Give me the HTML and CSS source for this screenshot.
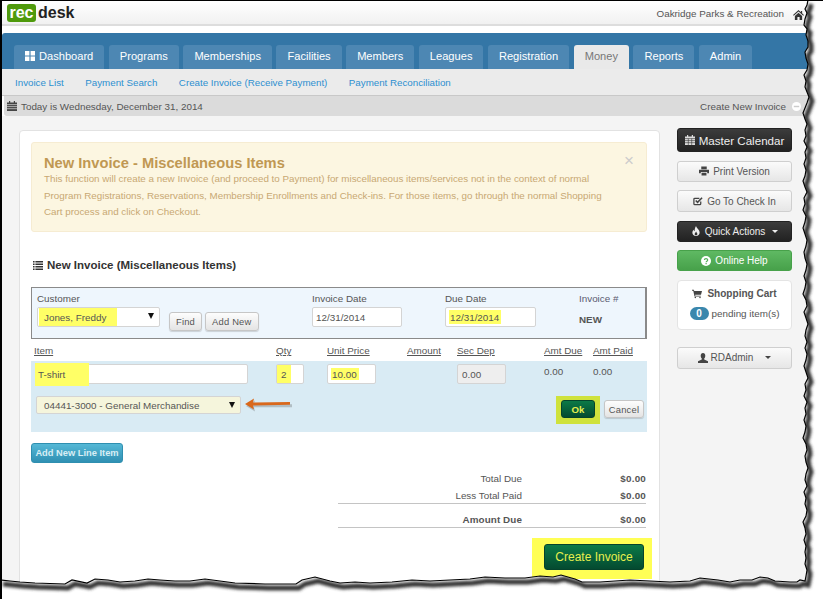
FILE: index.html
```html
<!DOCTYPE html>
<html lang="en">
<head>
  <meta charset="UTF-8" />
  <title>New Invoice - Miscellaneous Items</title>
  <link rel="stylesheet" href="styles.css">
</head>
<body>

<div class="shot">
  <div class="topbar">
    <div class="logo"><span class="logo-rec">rec</span><span class="logo-desk">desk</span></div>
    <div class="org">
      <span>Oakridge Parks &amp; Recreation</span>
      <svg class="home-icon" viewBox="0 0 12 11"><path d="M6 0 L8.6 2.4 V1 H10 V3.7 L12 5.6 L11.2 6.4 L6 1.7 L.8 6.4 L0 5.6 Z M2 6.6 L6 3 L10 6.6 V11 H7.2 V7.8 H4.8 V11 H2 Z" fill="#333"/></svg>
    </div>
  </div>

  <div class="nav">
    <a class="tab">
      <svg class="dash-icon" viewBox="0 0 10 10"><path d="M0 0H4.4V4.4H0Z M5.6 0H10V4.4H5.6Z M0 5.6H4.4V10H0Z M5.6 5.6H10V10H5.6Z" fill="#fff"/></svg>
      Dashboard
    </a>
    <a class="tab">Programs</a>
    <a class="tab">Memberships</a>
    <a class="tab">Facilities</a>
    <a class="tab">Members</a>
    <a class="tab">Leagues</a>
    <a class="tab">Registration</a>
    <a class="tab active">Money</a>
    <a class="tab">Reports</a>
    <a class="tab">Admin</a>
  </div>

  <div class="subnav">
    <a>Invoice List</a>
    <a>Payment Search</a>
    <a>Create Invoice (Receive Payment)</a>
    <a>Payment Reconciliation</a>
  </div>

  <div class="datebar">
    <div class="today">
      <svg class="cal-icon" viewBox="0 0 10 10"><path d="M0 1.5H10V10H0Z M2 0H3.2V2H2Z M6.8 0H8V2H6.8Z" fill="#444"/><path d="M0 3.6H10 M0 5.6H10 M0 7.7H10" stroke="#ddd" stroke-width=".7"/></svg>
      Today is Wednesday, December 31, 2014
    </div>
    <div class="crumb">Create New Invoice</div>
    <svg class="back-icon" viewBox="0 0 10 10"><circle cx="5" cy="5" r="5" fill="#fff"/><path d="M2 5H8" stroke="#ccc" stroke-width="1.6"/></svg>
  </div>

  <div class="content">
    <div class="card">
      <div class="alert">
        <span class="alert-close">&times;</span>
        <div class="alert-title">New Invoice - Miscellaneous Items</div>
        This function will create a new Invoice (and proceed to Payment) for miscellaneous items/services not in the context of normal<br>
        Program Registrations, Reservations, Membership Enrollments and Check-ins. For those items, go through the normal Shopping<br>
        Cart process and click on Checkout.
      </div>

      <h2 class="form-title">
        <svg class="list-icon" viewBox="0 0 10 9"><path d="M0 0H1.6V1.5H0Z M2.4 0H10V1.5H2.4Z M0 2.5H1.6V4H0Z M2.4 2.5H10V4H2.4Z M0 5H1.6V6.5H0Z M2.4 5H10V6.5H2.4Z M0 7.5H1.6V9H0Z M2.4 7.5H10V9H2.4Z" fill="#333"/></svg>
        New Invoice (Miscellaneous Items)
      </h2>

      <div class="customer-box">
        <div>
          <div class="field-label">Customer</div>
          <div class="customer-row">
            <div class="input select customer-select"><span class="hl hl-jones">Jones, Freddy</span><i class="caret"></i></div>
            <button class="btn-small find-btn">Find</button>
            <button class="btn-small">Add New</button>
          </div>
        </div>
        <div>
          <div class="field-label">Invoice Date</div>
          <div class="input date-input">12/31/2014</div>
        </div>
        <div>
          <div class="field-label">Due Date</div>
          <div class="input date-input due-input"><span class="hl hl-due">12/31/2014</span></div>
        </div>
        <div>
          <div class="field-label invoice-no">Invoice #</div>
          <div class="new-label">NEW</div>
        </div>
      </div>

      <div class="item-grid item-head">
        <u>Item</u><u>Qty</u><u>Unit Price</u><u>Amount</u><u>Sec Dep</u><u>Amt Due</u><u>Amt Paid</u>
      </div>

      <div class="line-panel">
        <div class="item-grid">
          <div class="input item-input"><span class="hl hl-tshirt">T-shirt</span></div>
          <div class="input qty-input"><span class="hl hl-qty">2</span></div>
          <div class="input price-input"><span class="hl hl-price">10.00</span></div>
          <div></div>
          <div class="input price-input dep-input">0.00</div>
          <div class="amt">0.00</div>
          <div class="amt">0.00</div>
        </div>
        <div class="line-actions">
          <div class="input select gl-select">04441-3000 - General Merchandise<i class="caret"></i></div>
          <svg class="orange-arrow" viewBox="0 0 50 16"><path d="M1 8 L10 2.5 L9 6.2 H47 V9.2 H9 L10 13.5 Z" fill="#555" opacity=".3" transform="translate(1 2)"/><path d="M1 8 L10 2.5 L9 6.5 L46 6 V8.8 L9 9.5 L10 13.5 Z" fill="#d9681c"/></svg>
          <div class="ok-mark"><button class="btn-green btn-ok">Ok</button></div>
          <button class="btn-small cancel-btn">Cancel</button>
        </div>
      </div>

      <button class="btn-add">Add New Line Item</button>

      <div class="totals">
        <div class="total-row"><span>Total Due</span><b>$0.00</b></div>
        <div class="total-row ruled"><span>Less Total Paid</span><b>$0.00</b></div>
        <div class="total-row ruled amount-due"><span>Amount Due</span><b>$0.00</b></div>
      </div>

      <div class="create-mark"><button class="btn-green btn-create">Create Invoice</button></div>
    </div>

    <div class="side">
      <button class="side-btn dark master">
        <svg class="ic" viewBox="0 0 10 10"><path d="M0 1.5H10V10H0Z M2 0H3.2V2H2Z M6.8 0H8V2H6.8Z" fill="#ddd"/><path d="M0 3.6H10 M0 5.6H10 M0 7.7H10 M3.3 3.6V10 M6.7 3.6V10" stroke="#333" stroke-width=".6"/></svg>
        Master Calendar
      </button>
      <button class="side-btn">
        <svg class="ic" viewBox="0 0 11 10"><path d="M2.5 0H8.5V3H2.5Z M0 3.5H11V7.5H9V6H2V7.5H0Z M2.8 6.8H8.2V10H2.8Z" fill="#444"/></svg>
        Print Version
      </button>
      <button class="side-btn tall">
        <svg class="ic" viewBox="0 0 11 10"><path d="M8.5 5.5V8a1 1 0 0 1-1 1H2a1 1 0 0 1-1-1V3a1 1 0 0 1 1-1H7" fill="none" stroke="#444" stroke-width="1.4"/><path d="M3 4.5L5 6.5L10 1.5" fill="none" stroke="#444" stroke-width="1.7"/></svg>
        Go To Check In
      </button>
      <button class="side-btn dark">
        <svg class="ic" viewBox="0 0 9 11"><path d="M4.5 0C5 2.5 8.5 4 8.5 7.2C8.5 9.5 6.8 11 4.5 11C2.2 11 .5 9.5 .5 7.2C.5 5.6 1.4 4.6 2 4C2.1 5 2.5 5.5 3 5.7C3 3.8 3.4 1.5 4.5 0Z" fill="#eee"/><path d="M4.6 6C5 7.2 6 7.6 6 8.8C6 9.7 5.4 10.3 4.5 10.3C3.6 10.3 3 9.7 3 8.8C3 7.8 4.2 7.2 4.6 6Z" fill="#333"/></svg>
        Quick Actions <i class="caret-sm white"></i>
      </button>
      <button class="side-btn green">
        <svg class="ic" viewBox="0 0 10 10"><circle cx="5" cy="5" r="5" fill="#fff"/><path d="M3.4 4C3.4 2.2 6.7 2.2 6.7 4C6.7 5.1 5.1 5.2 5.1 6.3" fill="none" stroke="#55b158" stroke-width="1.2"/><path d="M4.5 7H5.7V8.2H4.5Z" fill="#55b158"/></svg>
        Online Help
      </button>
      <div class="cart">
        <div class="cart-title">
          <svg class="ic" viewBox="0 0 12 10"><path d="M0 0H2.2L2.7 1.4H12L10.8 6H3.8L4 7H10.5V8H3L1.5 1H0Z" fill="#444"/><circle cx="4" cy="9.1" r=".9" fill="#444"/><circle cx="9.6" cy="9.1" r=".9" fill="#444"/></svg>
          Shopping Cart
        </div>
        <div class="cart-count"><span class="badge">0</span> pending item(s)</div>
      </div>
      <button class="side-btn tall user-btn">
        <svg class="ic" viewBox="0 0 10 10"><path d="M5 0C6.5 0 7.3 1.2 7.3 2.8C7.3 4 6.8 5 6.2 5.6V6.4L10 8.2V10H0V8.2L3.8 6.4V5.6C3.2 5 2.7 4 2.7 2.8C2.7 1.2 3.5 0 5 0Z" fill="#444"/></svg>
        RDAdmin <i class="caret-sm"></i>
      </button>
    </div>
  </div>

  <!-- torn paper edge of the screenshot, lies over the page -->
  <svg class="torn" viewBox="0 0 823 599">
    <defs>
      <path id="edge" d="M808 0L807 5 805 9 807 13 805 19 804 25 807 29 806 35 808 41 808 47 805 52 806 58 808 64 807 70 804 75 806 81 805 87 807 92 809 97 807 103 805 108 803 113 805 119 807 124 805 130 806 136 804 141 807 147 805 152 806 158 804 164 806 170 805 176 803 181 805 187 807 192 804 198 805 204 803 210 806 216 805 222 803 228 805 234 807 240 806 246 804 252 805 258 807 264 806 270 804 276 806 282 805 288 803 294 806 300 807 306 804 312 806 318 808 324 806 330 805 336 807 342 805 348 807 354 806 360 804 366 806 372 808 378 805 384 806 390 804 396 807 402 805 408 806 414 804 420 806 426 805 432 803 438 806 444 807 450 805 456 806 462 808 468 806 474 805 480 807 486 804 492 806 498 805 504 807 510 806 516 803 522 805 528 806 534 804 540 806 546 805 552 806 558 805 564 807 570 806 576 805 581 800 580 797 582 790 582 775 581 768 578 760 577 752 580 740 580 730 582 718 580 700 578 690 581 670 582 650 581 630 580 600 582 582 582 575 579 561 575 553 577 540 576 525 578 505 578 485 577 470 579 450 580 430 581 412 580 392 582 370 583 355 582 340 583 330 581 315 577 302 580 296 584 265 584 235 583 220 581 205 579 190 581 175 581 160 580 148 579 135 581 120 582 108 580 95 579 87 583 72 580 65 584 35 583 20 582 10 581 0 580"/>
      <clipPath id="outside">
        <path d="M808 0L823 0 823 599 0 599 0 580 10 581 20 582 35 583 65 584 72 580 87 583 95 579 108 580 120 582 135 581 148 579 160 580 175 581 190 581 205 579 220 581 235 583 265 584 296 584 302 580 315 577 330 581 340 583 355 582 370 583 392 582 412 580 430 581 450 580 470 579 485 577 505 578 525 578 540 576 553 577 561 575 575 579 582 582 600 582 630 580 650 581 670 582 690 581 700 578 718 580 730 582 740 580 752 580 760 577 768 578 775 581 790 582 797 582 800 580 805 581 806 576 807 570 805 564 806 558 805 552 806 546 804 540 806 534 805 528 803 522 806 516 807 510 805 504 806 498 804 492 807 486 805 480 806 474 808 468 806 462 805 456 807 450 806 444 803 438 805 432 806 426 804 420 806 414 805 408 807 402 804 396 806 390 805 384 808 378 806 372 804 366 806 360 807 354 805 348 807 342 805 336 806 330 808 324 806 318 804 312 807 306 806 300 803 294 805 288 806 282 804 276 806 270 807 264 805 258 804 252 806 246 807 240 805 234 803 228 805 222 806 216 803 210 805 204 804 198 807 192 805 187 803 181 805 176 806 170 804 164 806 158 805 152 807 147 804 141 806 136 805 130 807 124 805 119 803 113 805 108 807 103 809 97 807 92 805 87 806 81 804 75 807 70 808 64 806 58 805 52 808 47 808 41 806 35 807 29 804 25 805 19 807 13 805 9 807 5Z"/>
      </clipPath>
      <filter id="soft" x="-5%" y="-5%" width="110%" height="110%"><feGaussianBlur stdDeviation="1.8"/></filter>
    </defs>
    <rect class="torn-bg" width="823" height="599" clip-path="url(#outside)"/>
    <g clip-path="url(#outside)">
      <use href="#edge" class="torn-shadow" transform="translate(3 4)" filter="url(#soft)"/>
    </g>
    <use href="#edge" class="torn-line"/>
  </svg>
</div>

</body>
</html>
```

FILE: styles.css
```css
* {
  box-sizing: border-box;
}
body {
  margin: 0;
  background: #fff;
  font-family: "Liberation Sans", Arial, sans-serif;
  font-size: 9.85px;
  color: #555;
}
button {
  font-family: inherit;
  cursor: pointer;
}
.shot {
  position: relative;
  width: 823px;
  height: 599px;
  overflow: hidden;
  display: flex;
  flex-direction: column;
  background: #fff;
  border-top: 1px solid #000;
  border-left: 2px solid #000;
}

/* top bar */
.topbar {
  display: flex;
  justify-content: space-between;
  height: 25px;
  flex-shrink: 0;
  padding: 3px 19px 0 5px;
  background: linear-gradient(#fff, #f1f1f1);
  border-bottom: 2px solid #ddd;
}
.logo {
  display: flex;
  align-items: flex-start;
  font-size: 16px;
  font-weight: bold;
  line-height: 18px;
}
.logo-rec {
  width: 29px;
  height: 18px;
  text-align: center;
  color: #fff;
  background: #4f9a0c;
  border-radius: 3px;
}
.logo-desk {
  margin-left: 2px;
  color: #222;
}
.org {
  display: flex;
  align-items: flex-start;
  padding-top: 4px;
  line-height: 12px;
  white-space: nowrap;
}
.home-icon {
  width: 11px;
  height: 10px;
  margin: 2px 0 0 9px;
  flex-shrink: 0;
}

/* main nav */
.nav {
  display: flex;
  gap: 4.5px;
  height: 36px;
  flex-shrink: 0;
  margin-top: 7px;
  padding: 12px 0 0 12px;
  background: #3476a6;
  border-radius: 3px 0 0 0;
}
.tab {
  display: flex;
  align-items: center;
  padding: 0 11px 3px;
  font-size: 11.1px;
  color: #fff;
  background: #4d87b3;
  border-radius: 3px 3px 0 0;
}
.tab.active {
  color: #777;
  background: #e9e9e9;
}
.dash-icon {
  width: 10px;
  height: 10px;
  margin-right: 4px;
}

/* sub nav */
.subnav {
  display: flex;
  gap: 21.5px;
  height: 27px;
  flex-shrink: 0;
  align-items: center;
  padding: 1px 0 0 13px;
  color: #2d8fd0;
  background: #ebebeb;
  border-bottom: 1px solid #c8c8c8;
  font-size: 9.75px;
}

/* date bar */
.datebar {
  display: flex;
  align-items: center;
  height: 20px;
  flex-shrink: 0;
  margin-left: 2px;
  padding: 0 22px 0 3px;
  background: #dbdbdb;
  border-radius: 0 0 0 3px;
}
.today {
  display: flex;
  align-items: center;
  flex: 1;
}
.cal-icon {
  width: 10px;
  height: 10px;
  margin: 0 4px 0 0;
}
.back-icon {
  width: 9px;
  height: 9px;
  margin-left: 6px;
}

/* page body */
.content {
  display: flex;
  flex: 1;
  align-items: flex-start;
  gap: 17px;
  padding: 12px 0 0 17px;
  background: #f4f4f4;
}
.card {
  width: 641px;
  height: 480px;
  flex-shrink: 0;
  margin-top: 2px;
  padding: 11px 12px 0 11px;
  background: #fff;
  border: 1px solid #e2e2e2;
  border-radius: 4px;
}

.alert {
  position: relative;
  height: 90px;
  padding: 12px 12px 0;
  font-size: 9.8px;
  line-height: 16.5px;
  color: #c8a873;
  background: #fcf6e1;
  border: 1px solid #f6ecd2;
  border-radius: 3px;
}
.alert-title {
  font-size: 14.7px;
  font-weight: bold;
  line-height: 16px;
  color: #c09853;
}
.alert-close {
  position: absolute;
  top: 8px;
  right: 12px;
  font-size: 17px;
  line-height: 20px;
  color: #ccc;
}

.form-title {
  display: flex;
  align-items: center;
  height: 14px;
  margin: 26px 0 15px;
  padding-left: 2px;
  font-size: 11.5px;
  color: #333;
}
.list-icon {
  width: 10px;
  height: 9px;
  margin-right: 4px;
}

.customer-box {
  display: grid;
  grid-template-columns: 275px 133px 134px 1fr;
  height: 52px;
  padding: 4px 0 0 5px;
  background: #eef6fd;
  border: 1px solid #8a8a8a;
  border-right-width: 2px;
}
.field-label {
  line-height: 14px;
  margin-bottom: 1px;
}
.invoice-no {
  color: #5a5a70;
}
.new-label {
  margin-top: 7px;
  font-weight: bold;
  line-height: 14px;
}
.customer-row {
  display: flex;
  align-items: flex-start;
}
.input {
  display: flex;
  align-items: center;
  height: 20px;
  padding-left: 3px;
  background: #fff;
  border: 1px solid #d4d4d4;
  border-radius: 2px;
}
.select {
  position: relative;
}
.caret {
  position: absolute;
  top: 5px;
  right: 5px;
  width: 0;
  height: 0;
  border-left: 3.5px solid transparent;
  border-right: 3.5px solid transparent;
  border-top: 6px solid #111;
}
.customer-select {
  width: 123px;
  padding-left: 1px;
}
.date-input {
  width: 90px;
}
.due-input {
  width: 91px;
}
.hl {
  display: flex;
  flex-shrink: 0;
  align-items: center;
  background: #ffff66;
}
.hl-jones {
  width: 78px;
  height: 18px;
  padding-left: 5px;
}
.hl-due {
  width: 52px;
  height: 14px;
  padding-left: 1px;
  margin-left: 0;
}
.btn-small {
  height: 19px;
  padding: 0 6px;
  font-size: 9.4px;
  letter-spacing: .2px;
  color: #555;
  background: linear-gradient(#fdfdfd, #e4e4e4);
  border: 1px solid #c6c6c6;
  border-radius: 3px;
  box-shadow: 0 1px 1px rgba(0,0,0,0.15);
}
.customer-row .btn-small {
  margin-top: 5px;
}
.customer-row .find-btn {
  margin: 5px 3px 0 9px;
}

/* line items */
.item-grid {
  display: grid;
  grid-template-columns: 242px 51px 80px 50px 87px 49px 1fr;
}
.item-head {
  height: 14px;
  margin: 5px 0 3px;
  padding-left: 3px;
  line-height: 14px;
}
.line-panel {
  height: 71px;
  padding: 3px 3px 0;
  background: #d9ebf4;
}
.item-input {
  width: 213px;
  margin-left: 1px;
  padding-left: 0;
}
.hl-tshirt {
  width: 54px;
  height: 23px;
  padding-left: 3px;
  margin-left: -1px;
}
.qty-input {
  width: 28px;
  padding-left: 0;
}
.hl-qty {
  width: 14px;
  height: 18px;
  padding-left: 4px;
}
.price-input {
  width: 49px;
}
.hl-price {
  width: 28px;
  height: 12px;
  margin-left: 0;
  padding-left: 1px;
}
.dep-input {
  padding-left: 4px;
  background: #eee;
}
.amt {
  line-height: 16px;
}
.line-actions {
  display: flex;
  align-items: flex-start;
  margin-top: 12px;
}
.gl-select {
  width: 205px;
  height: 18px;
  margin-left: 2px;
  padding-left: 7px;
  background: #f5f5dc;
}
.orange-arrow {
  width: 50px;
  height: 16px;
  margin-left: 3px;
  flex-shrink: 0;
}
.ok-mark {
  margin-left: auto;
  padding: 4px 5px 6px;
  background: #cfe23c;
}
.btn-green {
  color: #e6ef4e;
  background: linear-gradient(#0b7a47, #044a30);
  border: 1px solid #05432c;
  border-radius: 3px;
}
.btn-ok {
  display: block;
  width: 34px;
  height: 18px;
  padding: 0;
  font-size: 9.6px;
  font-weight: bold;
}
.cancel-btn {
  width: 40px;
  height: 18px;
  margin: 4px 0 0 4px;
  padding: 0;
}

.btn-add {
  display: block;
  width: 92px;
  height: 20px;
  margin-top: 11px;
  padding: 0;
  font-size: 9.3px;
  font-weight: bold;
  color: #d8eef5;
  background: linear-gradient(#55b8d6, #3090b3);
  border: 1px solid #2f8fb0;
  border-radius: 3px;
}

.totals {
  width: 308px;
  margin: 7px 1px 0 auto;
}
.total-row {
  display: flex;
  justify-content: space-between;
  height: 17px;
  line-height: 17px;
}
.total-row span {
  width: 184px;
  text-align: right;
}
.total-row b {
  letter-spacing: .2px;
}
.ruled {
  border-bottom: 1px solid #c4c4c4;
}
.amount-due {
  height: 24px;
  padding-top: 7px;
}
.amount-due span {
  font-weight: bold;
  letter-spacing: .1px;
}
.create-mark {
  width: 120px;
  height: 41px;
  margin: 10px -5px 0 auto;
  padding: 6px 0 0 12px;
  background: #ffff55;
}
.btn-create {
  display: block;
  width: 100px;
  height: 26px;
  padding: 0;
  font-size: 12px;
}

/* sidebar */
.side {
  display: flex;
  flex-direction: column;
  width: 115px;
  flex-shrink: 0;
}
.side-btn {
  display: flex;
  align-items: center;
  justify-content: center;
  gap: 4px;
  height: 21px;
  margin-bottom: 8.5px;
  padding: 0;
  font-size: 10px;
  color: #555;
  background: linear-gradient(#fbfbfb, #e6e6e6);
  border: 1px solid #cfcfcf;
  border-radius: 3px;
}
.side-btn.tall {
  height: 22px;
}
.side-btn.dark {
  color: #eee;
  background: linear-gradient(#3c3c3c, #222);
  border-color: #222;
}
.side-btn.master {
  height: 24px;
  font-size: 11.6px;
}
.side-btn.green {
  color: #fff;
  background: linear-gradient(#5fb963, #47a14a);
  border-color: #47a14a;
}
.ic {
  width: 10px;
  height: 10px;
  flex-shrink: 0;
}
.caret-sm {
  width: 0;
  height: 0;
  margin-left: 3px;
  border-left: 3px solid transparent;
  border-right: 3px solid transparent;
  border-top: 3px solid #444;
}
.caret-sm.white {
  border-top-color: #eee;
}
.user-btn {
  gap: 3px;
}
.user-btn .caret-sm {
  margin-left: 9px;
}
.cart {
  height: 50px;
  margin-bottom: 17px;
  padding-top: 6px;
  background: #fff;
  border: 1px solid #e4e4e4;
  border-radius: 4px;
}
.cart-title {
  display: flex;
  align-items: center;
  justify-content: center;
  gap: 5px;
  height: 14px;
  font-size: 10.05px;
  font-weight: bold;
}
.cart-count {
  display: flex;
  align-items: center;
  justify-content: center;
  gap: 3px;
  height: 14px;
  margin-top: 6px;
}
.badge {
  width: 19px;
  height: 13px;
  font-size: 10px;
  font-weight: bold;
  line-height: 13px;
  text-align: center;
  color: #fff;
  background: #3a87ad;
  border-radius: 7px;
}

/* torn edge overlay */
.torn {
  position: absolute;
  top: -1px;
  left: -2px;
  width: 823px;
  height: 599px;
}
.torn-bg {
  fill: #fff;
}
.torn-shadow {
  fill: none;
  stroke: #333;
  stroke-width: 5;
}
.torn-line {
  fill: none;
  stroke: #000;
  stroke-width: 1.2;
}
```
